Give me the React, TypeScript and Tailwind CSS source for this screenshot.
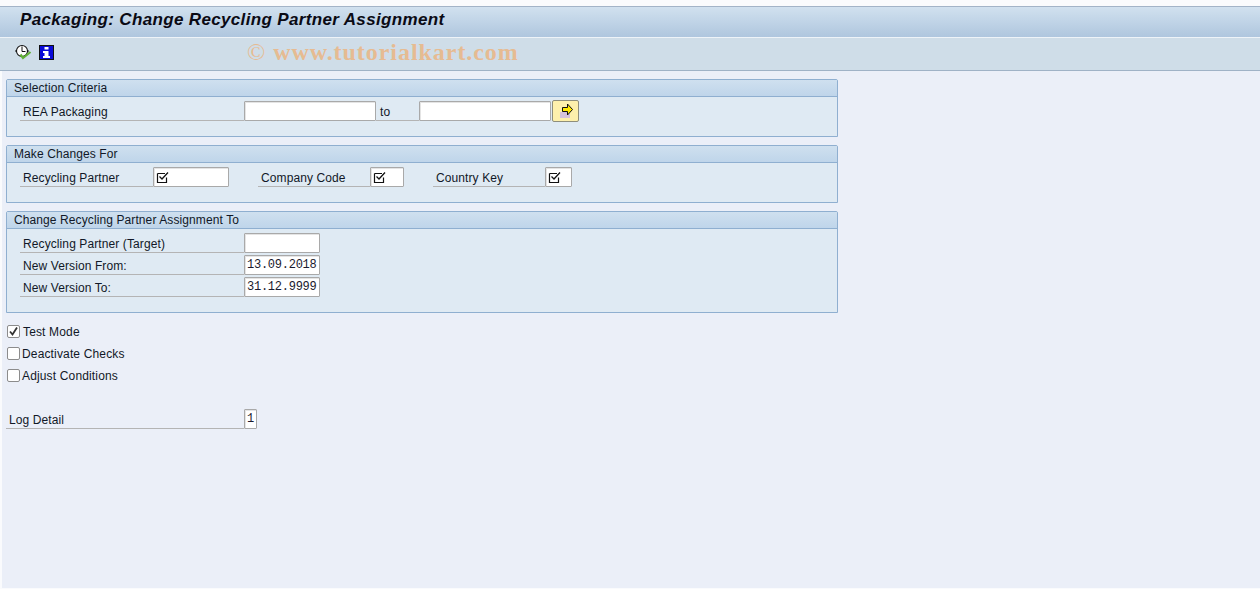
const ui = { fontFamily: '"Liberation Sans", Arial, sans-serif' };

function ExecuteIcon() {
  return (
    <svg width="17" height="16" viewBox="0 0 17 16" className="block">
      <path d="M0 7h2M12 7h2" stroke="#111" strokeWidth="1" />
      <circle cx="7" cy="7" r="5.5" fill="#fff" stroke="#111" strokeWidth="1.1" />
      <path d="M7 2.5v5h3.5" fill="none" stroke="#111" strokeWidth="1" />
      <path d="M5.5 10.5l2.5 3.5 7.5-6" fill="none" stroke="#5fb035" strokeWidth="2.2" />
    </svg>
  );
}

function InfoIcon() {
  return (
    <svg width="15" height="15" viewBox="0 0 15 15" className="block">
      <rect x="0.5" y="0.5" width="14" height="14" fill="#0a0ad8" stroke="#111" />
      <rect x="5.5" y="2" width="4" height="2.5" fill="#fff" />
      <path d="M4 6h5.5V11H11v2H4v-2h1.5V8H4z" fill="#fff" />
    </svg>
  );
}

function ArrowButton() {
  return (
    <button className="-mt-px ml-px flex h-[22px] w-[27px] items-center justify-center rounded-[2px] border border-[#8e8e7c] bg-[#fdf0ac]">
      <svg width="17" height="16" viewBox="0 0 17 16" className="block">
        <rect x="3" y="9" width="10" height="6" fill="#d5c2dc" />
        <path d="M5.5 4.5H10.5V1L15.5 6.5 10.5 12V8.5H5.5z" fill="#ffe800" stroke="#111" strokeWidth="1" />
      </svg>
    </button>
  );
}

function Field({ value, width, check }: { value?: string; width: string; check?: boolean }) {
  return (
    <div
      className={`box-border flex h-[20px] shrink-0 items-center rounded-[1px] border border-[#a9a9a9] bg-white pl-[2px] text-[12px] tracking-[-0.25px] text-[#1a1a2e] shadow-[inset_1px_1px_0_#e4e4e4] ${width}`}
      style={{ fontFamily: '"Liberation Mono", monospace' }}
    >
      {check && (
        <svg width="13" height="13" viewBox="0 0 13 13" className="block">
          <path d="M1.5 2.5h7.5M1.5 2.5v9h9V6.5" fill="none" stroke="#111" strokeWidth="1.2" />
          <path d="M3.5 5.5l2.5 2.5L12 1.5" fill="none" stroke="#111" strokeWidth="1.3" />
        </svg>
      )}
      {value}
    </div>
  );
}

function Label({ text, width, indent }: { text: string; width: string; indent?: boolean }) {
  return (
    <div className={`h-[20px] shrink-0 border-b border-[#b4b4b4] pl-[3px] pt-[3px] text-[12px] leading-[16px] tracking-[0.1px] text-[#111827] ${width}`}>
      <span className={indent ? "ml-px" : ""}>{text}</span>
    </div>
  );
}

function Group({ title, height, children }: { title: string; height: string; children: React.ReactNode }) {
  return (
    <section className={`box-border w-[832px] rounded-t-[2px] border border-[#8fafd0] bg-[#dfeaf3] ${height}`}>
      <h2 className="h-[17px] border-b border-[#8fafd0] bg-gradient-to-b from-[#cfe0ef] to-[#bfd5ea] pl-[7px] text-[12px] font-normal leading-[16px] tracking-[0.1px] text-[#111827]">
        {title}
      </h2>
      {children}
    </section>
  );
}

function Check({ label, checked, gap }: { label: string; checked?: boolean; gap: string }) {
  return (
    <div className={`flex h-[22px] items-center text-[12px] tracking-[0.15px] text-[#111827] ${gap}`}>
      <span className="box-border flex h-[13px] w-[13px] items-center justify-center rounded-[2px] border border-[#8c8c8c] bg-white">
        {checked && (
          <svg width="11" height="11" viewBox="0 0 11 11" className="block">
            <path d="M2 5.5l2.5 3L9 1.5" fill="none" stroke="#333" strokeWidth="1.8" />
          </svg>
        )}
      </span>
      <span className="pt-px">{label}</span>
    </div>
  );
}

export default function App() {
  return (
    <div className="flex h-[589px] w-[1260px] flex-col overflow-hidden bg-[#fafbfd] pt-[6px]" style={ui}>
      <header className="box-border h-[32px] border-y border-t-[#a3b4c8] border-b-[#eef3f8] bg-gradient-to-b from-[#d1e1ef] to-[#afc6de] pl-[20px]">
        <h1 className="text-[17px] font-bold italic leading-[26px] tracking-[0.35px] text-[#0a0a14]">
          Packaging: Change Recycling Partner Assignment
        </h1>
      </header>
      <div className="box-border flex h-[33px] items-center border-b border-[#9fb2c6] bg-[#cfdde8] pb-[4px] pl-[15px]">
        <ExecuteIcon />
        <span className="ml-[7px]"><InfoIcon /></span>
        <span
          className="ml-[193px] text-[24px] font-bold leading-none tracking-[0.95px] text-[#e6bb92]"
          style={{ fontFamily: '"Liberation Serif", serif' }}
        >
          <span className="font-normal">©</span> www.tutorialkart.com
        </span>
      </div>

      <main className="mb-px ml-[2px] flex min-h-0 flex-1 flex-col bg-[#ebeff8] pl-[4px] pt-[8px]">
        <Group title="Selection Criteria" height="h-[58px]">
          <div className="ml-[13px] mt-[4px] flex">
            <Label text="REA Packaging" width="w-[224px]" />
            <Field width="w-[132px]" />
            <Label text="to" width="w-[43px]" indent />
            <Field width="w-[132px]" />
            <ArrowButton />
          </div>
        </Group>

        <div className="mt-[8px]">
          <Group title="Make Changes For" height="h-[58px]">
            <div className="ml-[13px] mt-[4px] flex">
              <Label text="Recycling Partner" width="w-[133px]" />
              <Field width="w-[76px]" check />
              <Label text="Company Code" width="ml-[29px] w-[112px]" />
              <Field width="w-[34px]" check />
              <Label text="Country Key" width="ml-[29px] w-[112px]" />
              <Field width="w-[27px]" check />
            </div>
          </Group>
        </div>

        <div className="mt-[8px]">
          <Group title="Change Recycling Partner Assignment To" height="h-[102px]">
            <div className="ml-[13px] mt-[4px] flex flex-col gap-[2px]">
              <div className="flex">
                <Label text="Recycling Partner (Target)" width="w-[224px]" />
                <Field width="w-[76px]" />
              </div>
              <div className="flex">
                <Label text="New Version From:" width="w-[224px]" />
                <Field width="w-[76px]" value="13.09.2018" />
              </div>
              <div className="flex">
                <Label text="New Version To:" width="w-[224px]" />
                <Field width="w-[76px]" value="31.12.9999" />
              </div>
            </div>
          </Group>
        </div>

        <div className="ml-px mt-[7px]">
          <Check label="Test Mode" checked gap="gap-[3px]" />
          <Check label="Deactivate Checks" gap="gap-[2px]" />
          <Check label="Adjust Conditions" gap="gap-[2px]" />
        </div>

        <div className="mt-[23px] flex">
          <Label text="Log Detail" width="w-[238px]" />
          <Field width="w-[13px]" value="1" />
        </div>
      </main>
    </div>
  );
}
